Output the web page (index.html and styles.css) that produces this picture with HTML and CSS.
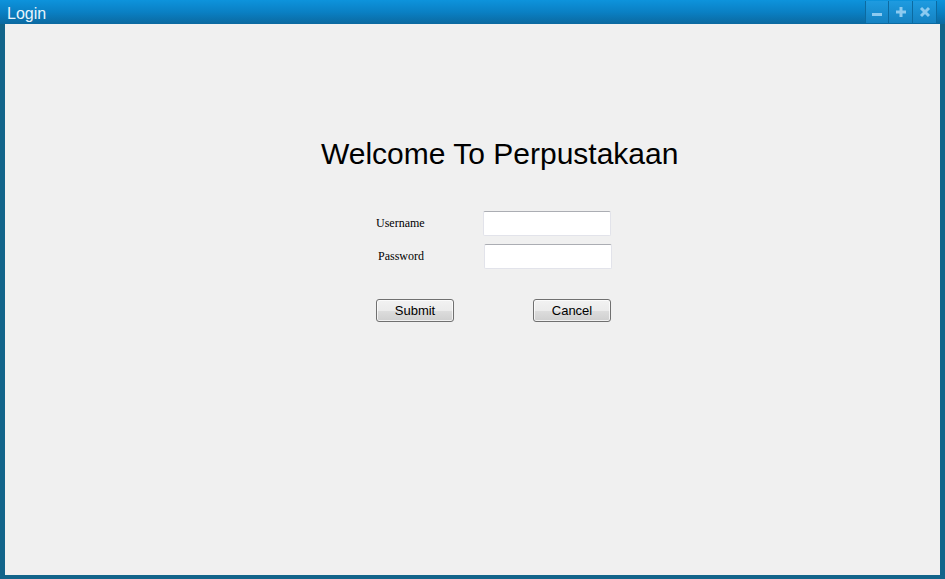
FILE: index.html
```html
<!DOCTYPE html>
<html>
<head>
<meta charset="utf-8">
<title>Login</title>
<link rel="stylesheet" href="styles.css">
</head>
<body>
<div class="window">
  <div class="titlebar">
    <span class="title">Login</span>
    <div class="controls">
      <span class="ctl"><svg width="12" height="12" viewBox="0 0 12 12"><rect x="1" y="7" width="10" height="3" fill="#8ccaf0"/></svg></span>
      <span class="ctl"><svg width="12" height="12" viewBox="0 0 12 12"><rect x="1" y="4.5" width="10" height="3" fill="#8ccaf0"/><rect x="4.5" y="1" width="3" height="10" fill="#8ccaf0"/></svg></span>
      <span class="ctl"><svg width="12" height="12" viewBox="0 0 12 12"><path d="M2 2 L10 10 M10 2 L2 10" stroke="#8ccaf0" stroke-width="3"/></svg></span>
    </div>
  </div>
  <div class="content">
    <h1 class="heading">Welcome To Perpustakaan</h1>
    <div class="form">
      <div class="row">
        <label class="label">Username</label>
        <input class="field" type="text">
      </div>
      <div class="row row-pass">
        <label class="label label-pass">Password</label>
        <input class="field" type="password">
      </div>
      <div class="buttons">
        <button class="btn">Submit</button>
        <button class="btn">Cancel</button>
      </div>
    </div>
  </div>
</div>
</body>
</html>
```
FILE: styles.css
```css
* { box-sizing: border-box; }
html, body { margin: 0; padding: 0; }
body { width: 945px; height: 579px; overflow: hidden; background: #12648a; }
.window {
  width: 945px;
  height: 579px;
  display: flex;
  flex-direction: column;
}
.titlebar {
  height: 24px;
  flex: 0 0 24px;
  background: linear-gradient(to bottom, #0d93dc 0%, #0a80c4 50%, #0b69a0 100%);
  display: flex;
  justify-content: space-between;
  align-items: flex-start;
}
.title {
  font-family: "Liberation Sans", Arial, sans-serif;
  font-size: 16px;
  color: #e8f4fc;
  line-height: 22px;
  padding-top: 3px;
  padding-left: 7px;
}
.controls {
  display: flex;
  padding-top: 1px;
  padding-right: 8px;
}
.ctl {
  width: 24px;
  height: 22px;
  display: flex;
  align-items: center;
  justify-content: center;
  background: linear-gradient(to bottom, #1e9be0, #1582c2);
  border-right: 1px solid #0c6aa0;
}
.ctl:first-child { border-left: 1px solid #0c6aa0; }
.content {
  flex: 1;
  background: #f0f0f0;
  border-left: 5px solid #12648a;
  border-right: 5px solid #12648a;
  border-bottom: 4px solid #12648a;
  padding-top: 115px;
}
.heading {
  margin: 0;
  padding-left: 316px;
  font-family: "Liberation Sans", Arial, sans-serif;
  font-weight: normal;
  font-size: 30px;
  line-height: 30px;
  color: #000;
}
.form {
  margin-left: 371px;
  margin-top: 42px;
  width: 240px;
}
.row {
  display: flex;
  align-items: center;
  height: 25px;
}
.row-pass { margin-top: 8px; padding-left: 1px; }
.label {
  width: 107px;
  font-family: "Liberation Serif", "Times New Roman", serif;
  font-size: 12px;
  color: #000;
}
.label-pass { padding-left: 1px; }
.field {
  width: 128px;
  height: 25px;
  margin: 0;
  padding: 0;
  background: #fff;
  border: 1px solid #e2e3ea;
  border-top-color: #abadb3;
  border-radius: 2px;
  outline: none;
}
.buttons {
  display: flex;
  justify-content: space-between;
  margin-top: 30px;
  width: 235px;
}
.btn {
  width: 78px;
  height: 23px;
  margin: 0;
  padding: 0;
  font-family: "Liberation Sans", Arial, sans-serif;
  font-size: 13px;
  color: #000;
  border: 1px solid #707070;
  border-radius: 3px;
  background: linear-gradient(to bottom, #f2f2f2 0%, #ebebeb 50%, #dddddd 51%, #cfcfcf 100%);
  box-shadow: inset 0 0 0 1px rgba(255,255,255,0.7);
}
```
